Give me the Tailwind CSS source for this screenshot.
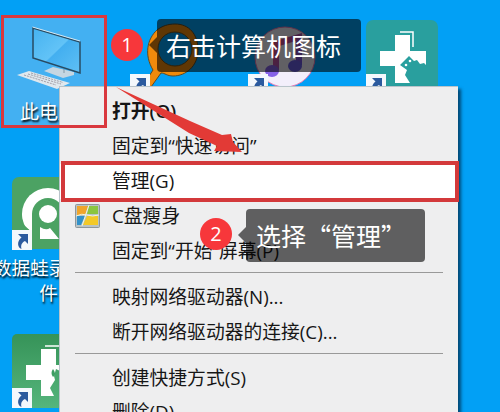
<!DOCTYPE html>
<html lang="zh-CN">
  <head>
    <meta charset="UTF-8" />
    <meta name="viewport" content="width=device-width, initial-scale=1.0" />
    <title>此电脑</title>
    <script src="https://cdn.jsdelivr.net/npm/@tailwindcss/browser@4"></script>
  </head>
  <body class="relative h-[412px] w-[500px] overflow-hidden bg-[#02a0f5] font-['Open_Sans','Noto_Sans_CJK_SC',sans-serif]">
    <!-- Desktop icons -->
    <svg class="absolute inset-0" width="500" height="412" viewBox="0 0 500 412">
      <defs>
        <linearGradient id="screen" x1="0" y1="0" x2="1" y2="1">
          <stop offset="0" stop-color="#45b2f0" />
          <stop offset=".5" stop-color="#62c3f7" />
          <stop offset=".52" stop-color="#43aff0" />
          <stop offset="1" stop-color="#5fc0f5" />
        </linearGradient>
        <linearGradient id="note" x1="0" y1="0" x2="1" y2="1">
          <stop offset="0" stop-color="#f0507a" />
          <stop offset="1" stop-color="#6a55e8" />
        </linearGradient>
        <linearGradient id="green" x1="0" y1="0" x2="0" y2="1">
          <stop offset="0" stop-color="#369358" />
          <stop offset="1" stop-color="#55b57c" />
        </linearGradient>
        <g id="shortcut">
          <rect width="20" height="20" fill="#f4f8fc" />
          <path d="M6 4h10v10l-3-3c-3 1.500-4.500 4-3.500 8-4-1.500-5-7.500 0-11.500z" fill="#2b5a9e" />
        </g>
      </defs>

      <rect x="2" y="16" width="104" height="111" fill="#43b0f2" />
      <!-- computer -->
      <path d="M44 71l9-4 21 5v3l-11 3z" fill="#c5d6e2" />
      <path d="M33 28l47 14v31L33 58z" fill="url(#screen)" stroke="#284b63" stroke-width="1.500" />
      <path d="M32.500 27l47.500 14" stroke="#d5e8f3" stroke-width="1" />
      <path d="M64 69v4" stroke="#8297a5" />
      <path d="M17 75l12-4 41 12-13 6z" fill="#dfe8ee" />
      <path d="M28 74l33 10M31 73l32 9.500M24 75l32 10" stroke="#a39fa8" stroke-width="1" stroke-dasharray="2 1" />

      <!-- search tool -->
      <path d="M175 24c14 0 23 10 23 26s-12 26-25 26c-6 0-8-3-12-3l-10 14h-9l11-17c-9-15-6-31 4-40 5-4 11-6 18-6z" fill="#f08a0c" stroke="#5c4a26" />
      <circle cx="175" cy="49" r="17" fill="#02a0f5" stroke="#7a5010" />

      <!-- music player -->
      <circle cx="285" cy="57" r="30" fill="#f3effb" stroke="#e97ab3" />
      <path d="M276 70V44l23-7v28" fill="none" stroke="url(#note)" stroke-width="6" />
      <ellipse cx="272" cy="71" rx="7" ry="6" fill="#8561e8" />
      <ellipse cx="295" cy="66" rx="7" ry="6" fill="#6a5de4" />

      <!-- repair tools -->
      <rect x="366" y="20" width="72" height="72" rx="7" fill="#299f9e" />
      <path d="M395 35h15v16h16v15h-16v17H395V66H380V51h15z" fill="#fff" />
      <path d="M400 32h13v15" fill="none" stroke="#fff" stroke-width="1.500" />
      <path d="M400 65l9-9 5 5 3-1 3 4 4-1 3 3v17h-17l-5-8 2-5z" fill="#299f9e" />
      <circle cx="406" cy="65" r="1.300" fill="#fff" />
      <circle cx="410" cy="61" r="1.300" fill="#fff" />

      <!-- screen recorder -->
      <rect x="12" y="177" width="72" height="72" rx="7" fill="#4ca263" />
      <circle cx="48" cy="214" r="26" fill="#fff" />
      <path d="M32 240v-26a16 16 0 0 1 32 0v26z" fill="#4ca263" />
      <path d="M18 220l14 12v12H18z" fill="#4ca263" />
      <path d="M22 214h10v18q-9-7-10-18z" fill="#fff" />
      <circle cx="48" cy="214" r="9" fill="#fff" />
      <path d="M40 227q6 4 10 1l9 11h-19z" fill="#fff" />

      <rect x="12" y="334" width="72" height="74" rx="5" fill="url(#green)" />
      <path d="M41 349h15v16h8v8l-8-4-2 7 1 4-5 8 4 8h-13v-16H26v-15h15z" fill="#fff" />
      <path d="M45 346h16" stroke="#fff" stroke-width="1.500" />
      <path d="M53 369q4 5 0 8-3-4 0-8z" fill="#3d9d62" />

      <use href="#shortcut" x="130" y="74" />
      <use href="#shortcut" x="248" y="74" />
      <use href="#shortcut" x="366" y="74" />
      <use href="#shortcut" x="12" y="230" />
      <use href="#shortcut" x="12" y="388" />
    </svg>
    <div class="absolute top-[98px] left-5 text-[19px] leading-7 whitespace-nowrap text-white text-shadow-[1px_2px_2px_#000]">此电脑</div>
    <div class="absolute top-[255px] -left-[9px] w-[115px] text-center text-[18.500px] leading-[25px] text-white text-shadow-[1px_2px_2px_#000]">数据蛙录屏软件</div>

    <!-- Context menu -->
    <ul class="absolute top-[86px] left-[59px] flex h-[340px] w-[399px] flex-col border-t border-l border-[#b9c4ca] bg-[#eeeeef] pt-[7px] text-[18.800px] leading-[35px] whitespace-nowrap text-[#161616] shadow-[3px_3px_3px_#004a78]">
      <li class="h-[35px] pl-[52px] font-semibold">打开(O)</li>
      <li class="h-[35px] pl-[52px]">固定到“快速访问”</li>
      <li class="h-[35px] bg-white pl-[52px]">管理(G)</li>
      <li class="flex h-[35px] items-center pl-[15px]">
        <svg class="mr-[12px]" width="25" height="25" viewBox="0 0 25 25">
          <rect x=".5" y=".5" width="24" height="23" rx="1" fill="#b9c3c6" stroke="#8e979b" />
          <path d="M2 2h11l-3 9H2z" fill="#f0a52c" />
          <path d="M14 2h9v8H12z" fill="#8bc53f" />
          <path d="M2 12h8l-4 9H2z" fill="#3291c9" />
          <path d="M12 12h11v9H8z" fill="#f3c928" />
          <path d="M14 1L7 22M1 12q6-3 11-1t12 0" fill="none" stroke="#eef5df" stroke-width="1" />
        </svg>
        C盘瘦身
      </li>
      <li class="h-[35px] pl-[52px]">固定到“开始”屏幕(P)</li>
      <li class="mt-[3px] mr-[15px] mb-[7px] ml-[15px] h-px shrink-0 bg-[#999]"></li>
      <li class="h-[35px] pl-[52px]">映射网络驱动器(N)...</li>
      <li class="h-[35px] pl-[52px]">断开网络驱动器的连接(C)...</li>
      <li class="mt-[3px] mr-[15px] mb-[7px] ml-[15px] h-px shrink-0 bg-[#999]"></li>
      <li class="h-[35px] pl-[52px]">创建快捷方式(S)</li>
      <li class="-mt-px h-[35px] pl-[52px]">删除(D)</li>
    </ul>

    <!-- Annotations -->
    <div class="absolute top-[15px] left-px h-[113px] w-[106px] border-[3px] border-[#d9383e]"></div>
    <div class="absolute top-[161px] left-[61px] h-[41px] w-[398px] border-4 border-[#d3393b]"></div>
    <svg class="absolute inset-0" width="500" height="412" viewBox="0 0 500 412">
      <path d="M116 87l74 34 32 14 9-1 2 8 9 10-28-1 3-5-28-13z" fill="#e23a36" />
      <path d="M157 37v16l-8-8z" fill="#000" fill-opacity=".6" />
      <path d="M246 227v16l-8-8z" fill="#000" fill-opacity=".6" />
    </svg>
    <div class="absolute top-[29px] left-[111px] flex size-8 items-center justify-center rounded-full bg-[#f7373b] text-xl text-white">1</div>
    <div class="absolute top-[218px] left-[200px] flex size-8 items-center justify-center rounded-full bg-[#f7373b] text-xl text-white">2</div>
    <div class="absolute top-[19px] left-[157px] flex h-[53px] w-[204px] items-center rounded bg-black/60 pl-[9px] font-['Noto_Sans_CJK_SC',sans-serif] text-[25px] whitespace-nowrap text-white">右击计算机图标</div>
    <div class="absolute top-[209px] left-[246px] flex h-[53px] w-[179px] items-center rounded bg-black/60 pl-[10px] font-['Noto_Sans_CJK_SC',sans-serif] text-[25px] whitespace-nowrap text-white">选择“管理”</div>
  </body>
</html>
